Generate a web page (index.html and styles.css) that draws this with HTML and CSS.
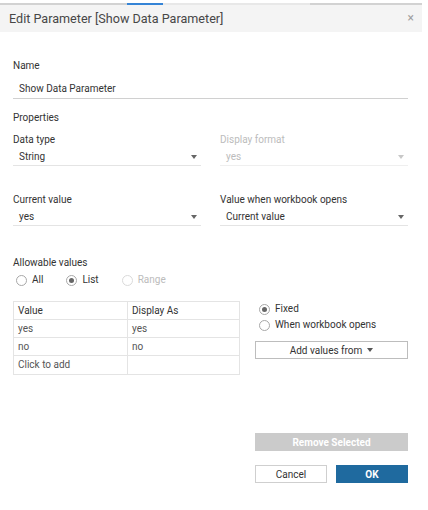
FILE: index.html
```html
<!DOCTYPE html>
<html>
<head>
<meta charset="utf-8">
<link rel="stylesheet" href="styles.css">
</head>
<body>
<div class="dialog">
  <div class="titlebar">
    <span class="seg seg-blue"></span>
    <span class="seg seg-light"></span>
    <span class="title">Edit Parameter [Show Data Parameter]</span>
    <span class="close">×</span>
  </div>
  <div class="content">
    <div class="label name-label">Name</div>
    <div class="textfield">Show Data Parameter</div>

    <div class="label section">Properties</div>
    <div class="grid grid-first">
      <div class="field">
        <div class="label">Data type</div>
        <div class="select"><span>String</span><span class="arrow"></span></div>
      </div>
      <div class="field disabled">
        <div class="label">Display format</div>
        <div class="select"><span>yes</span><span class="arrow"></span></div>
      </div>
    </div>
    <div class="grid grid-second">
      <div class="field">
        <div class="label">Current value</div>
        <div class="select"><span>yes</span><span class="arrow"></span></div>
      </div>
      <div class="field">
        <div class="label">Value when workbook opens</div>
        <div class="select"><span>Current value</span><span class="arrow"></span></div>
      </div>
    </div>

    <div class="label allow-label">Allowable values</div>
    <div class="radios">
      <span class="radio"><span class="circle"></span>All</span>
      <span class="radio checked"><span class="circle"></span>List</span>
      <span class="radio off"><span class="circle"></span>Range</span>
    </div>

    <div class="lower">
      <div class="table">
        <div class="row head"><div class="cell">Value</div><div class="cell">Display As</div></div>
        <div class="row"><div class="cell">yes</div><div class="cell">yes</div></div>
        <div class="row"><div class="cell">no</div><div class="cell">no</div></div>
        <div class="row last"><div class="cell">Click to add</div><div class="cell"></div></div>
      </div>
      <div class="side">
        <div class="radio vradio checked"><span class="circle"></span>Fixed</div>
        <div class="radio vradio"><span class="circle"></span>When workbook opens</div>
        <div class="btn addvals">Add values from <span class="arrow"></span></div>
      </div>
    </div>

    <div class="footer">
      <div class="btn remove">Remove Selected</div>
      <div class="actions">
        <div class="btn cancel">Cancel</div>
        <div class="btn ok">OK</div>
      </div>
    </div>
  </div>
</div>
</body>
</html>
```
FILE: styles.css
```css
* { box-sizing: border-box; }
html, body { margin: 0; padding: 0; background: #fff; }
body {
  font-family: Roboto, "Liberation Sans", Arial, sans-serif;
  font-size: 10px;
  color: #333;
}
.dialog { width: 422px; }
.titlebar {
  position: relative;
  margin-top: 3px;
  height: 29px;
  border-top: 2px solid #d2d2d2;
  background: #f4f4f4;
  display: flex;
  align-items: center;
  justify-content: space-between;
  padding: 0 8px 0 9px;
}
.seg { position: absolute; top: -2px; height: 2px; }
.seg-blue { left: 127px; width: 36px; background: #3584d6; }
.seg-light { left: 163px; width: 147px; background: #e8e8e8; }
.title { font-size: 12.6px; color: #474747; line-height: 27px; }
.close { font-size: 12px; color: #a0a0a0; line-height: 27px; }

.content { padding: 0 14px 0 13px; }
.label { line-height: 14px; color: #333; }
.name-label { margin-top: 27px; }
.textfield {
  margin-top: 7px;
  padding-left: 6px;
  line-height: 18px;
  border-bottom: 1px solid #d0d0d0;
  color: #333;
}
.section { margin-top: 12px; }
.grid {
  display: grid;
  grid-template-columns: 188px 188px;
  column-gap: 19px;
}
.grid-first { margin-top: 8px; }
.grid-second { margin-top: 27px; }
.select {
  margin-top: 1px;
  display: flex;
  align-items: center;
  justify-content: space-between;
  padding: 0 4px 0 6px;
  line-height: 17px;
  border-bottom: 1px solid #e4e4e4;
}
.arrow {
  display: inline-block;
  width: 0; height: 0;
  border-left: 3px solid transparent;
  border-right: 3px solid transparent;
  border-top: 4px solid #666;
}
.disabled .label, .disabled .select { color: #bcbcbc; }
.disabled .arrow { border-top-color: #c8c8c8; }
.disabled .select { border-bottom-color: #efefef; }

.allow-label { margin-top: 30px; }
.radios {
  margin-top: 3px;
  display: flex;
  padding-left: 3px;
  line-height: 14px;
}
.radio {
  display: inline-flex;
  align-items: center;
  margin-right: 23px;
  color: #333;
}
.circle {
  width: 11px; height: 11px;
  border: 1px solid #a8a8a8;
  border-radius: 50%;
  margin-right: 5px;
  display: inline-flex;
  align-items: center;
  justify-content: center;
  background: #fff;
}
.checked .circle::after {
  content: "";
  width: 5px; height: 5px;
  border-radius: 50%;
  background: #666;
}
.radio.off { color: #bcbcbc; }
.radio.off .circle { border-color: #dadada; }

.lower {
  margin-top: 14px;
  display: flex;
  gap: 15px;
  align-items: flex-start;
}
.table {
  width: 227px;
  border: 1px solid #e4e4e4;
}
.row {
  display: grid;
  grid-template-columns: 113px 1fr;
  height: 18px;
  border-bottom: 1px solid #e4e4e4;
}
.row.last { border-bottom: none; }
.cell {
  padding-left: 4px;
  line-height: 17px;
  color: #555;
}
.cell + .cell { border-left: 1px solid #e4e4e4; }
.head .cell { color: #333; }

.side { width: 153px; }
.vradio {
  display: flex;
  margin-right: 0;
  padding-left: 4px;
  line-height: 16px;
  height: 16px;
}
.btn {
  display: flex;
  align-items: center;
  justify-content: center;
  height: 18px;
  font-size: 10px;
}
.addvals {
  margin-top: 8px;
  border: 1px solid #bdbdbd;
  color: #333;
  gap: 5px;
}
.addvals .arrow { border-top-color: #555; }

.footer {
  width: 153px;
  margin-left: auto;
  margin-top: 58px;
}
.remove {
  background: #cbcbcb;
  color: #fff;
  font-weight: bold;
  height: 18px;
}
.actions {
  margin-top: 14px;
  display: flex;
  justify-content: space-between;
}
.cancel {
  width: 72px;
  border: 1px solid #cfcfcf;
  color: #333;
}
.ok {
  width: 72px;
  background: #1f6a9f;
  color: #fff;
  font-weight: bold;
}
```
